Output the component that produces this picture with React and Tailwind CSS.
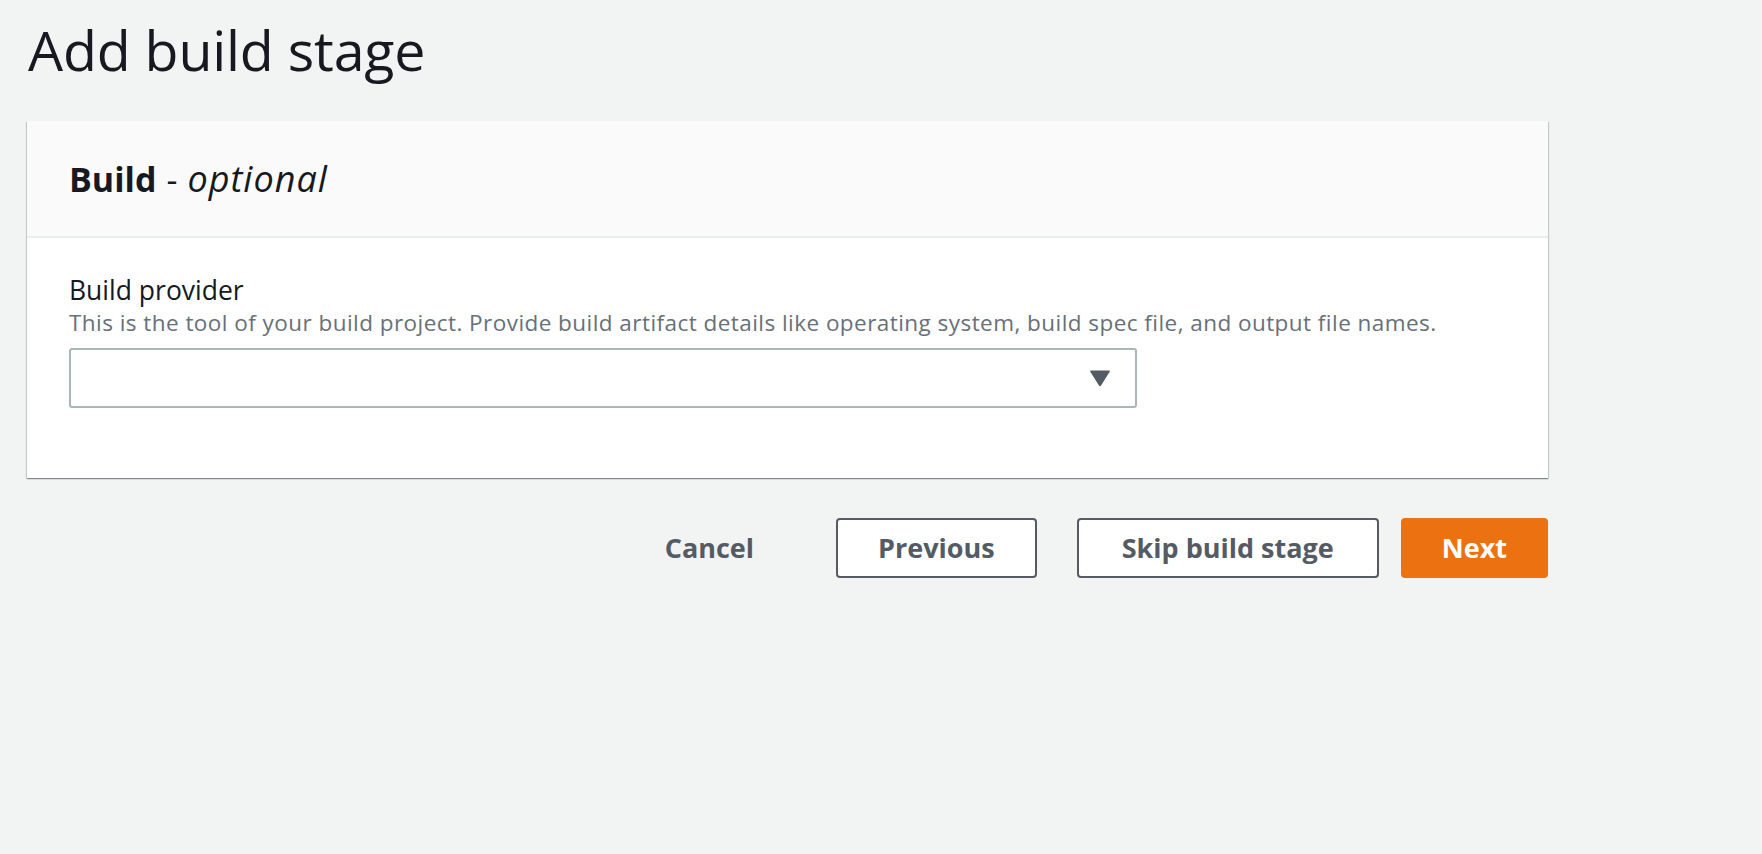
import React from 'react'

const font = { fontFamily: '"Open Sans", "Noto Sans", Arial, sans-serif' }

function CaretDown() {
  return (
    <svg width="22" height="18" viewBox="0 0 22 18" className="text-[#545b64]">
      <path d="M2 1.5 L20 1.5 Q21.5 1.5 20.7 2.8 L12.2 16.3 Q11 18 9.8 16.3 L1.3 2.8 Q0.5 1.5 2 1.5 Z" fill="currentColor" />
    </svg>
  )
}

export default function App() {
  return (
    <div className="min-h-screen bg-[#f2f3f3] text-[#16191f]" style={font}>
      <div className="w-[1521px] ml-[27px] pt-[14px]">
        <h1 className="text-[55.5px] leading-[72px] font-normal tracking-[-0.2px] ml-[1px]">Add build stage</h1>

        {/* Build card */}
        <div className="mt-[35px] bg-white shadow-[0_1px_1px_0_rgba(0,28,36,0.3),1px_1px_1px_0_rgba(0,28,36,0.15),-1px_1px_1px_0_rgba(0,28,36,0.15)]">
          <div className="h-[117px] bg-[#fafafa] border-b-2 border-[#eaeded] flex items-center px-[42px]">
            <h2 className="text-[34px] leading-none">
              <span className="font-bold">Build</span>
              <span className="font-normal mx-[10px]">-</span>
              <span className="italic font-normal text-[36px] tracking-[1px]">optional</span>
            </h2>
          </div>
          <div className="px-[42px] pt-[35px] pb-[70px]">
            <div className="text-[26.5px] leading-[34px] text-[#16191f]">Build provider</div>
            <div className="text-[22.5px] leading-[30px] text-[#687078] tracking-[0.45px] mt-[1px]">
              This is the tool of your build project. Provide build artifact details like operating system, build spec file, and output file names.
            </div>
            <div className="mt-[10px] w-[1068px] h-[60px] border-2 border-[#aab7b8] rounded-[3px] bg-white flex items-center justify-end pr-[24px]">
              <CaretDown />
            </div>
          </div>
        </div>

        {/* Actions */}
        <div className="mt-[40px] flex justify-end items-center text-[27px] font-bold">
          <button className="h-[60px] pr-[82px] text-[#545b64]">Cancel</button>
          <button className="h-[60px] px-[40px] border-2 border-[#545b64] rounded-[4px] bg-white text-[#545b64]">Previous</button>
          <button className="ml-[40px] h-[60px] px-[43px] border-2 border-[#545b64] rounded-[4px] bg-white text-[#545b64]">Skip build stage</button>
          <button className="ml-[22px] h-[60px] px-[41px] rounded-[4px] bg-[#ec7211] text-white">Next</button>
        </div>
      </div>
    </div>
  )
}
